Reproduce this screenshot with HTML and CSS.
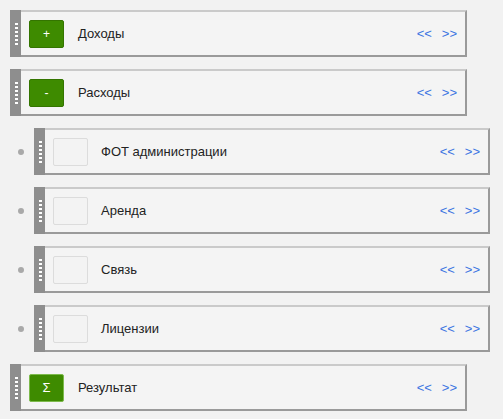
FILE: index.html
```html
<!DOCTYPE html>
<html>
<head>
<meta charset="utf-8">
<link rel="stylesheet" href="styles.css">
</head>
<body>
<div class="list">
  <div class="row">
    <div class="card">
      <div class="handle"><span class="grip"></span></div>
      <div class="body">
        <span class="btn">+</span>
        <span class="title">Доходы</span>
        <span class="nav"><a>&lt;&lt;</a><a>&gt;&gt;</a></span>
      </div>
    </div>
  </div>
  <div class="row">
    <div class="card">
      <div class="handle"><span class="grip"></span></div>
      <div class="body">
        <span class="btn">-</span>
        <span class="title">Расходы</span>
        <span class="nav"><a>&lt;&lt;</a><a>&gt;&gt;</a></span>
      </div>
    </div>
  </div>
  <div class="row child">
    <span class="bullet"></span>
    <div class="card">
      <div class="handle"><span class="grip"></span></div>
      <div class="body">
        <span class="box"></span>
        <span class="title">ФОТ администрации</span>
        <span class="nav"><a>&lt;&lt;</a><a>&gt;&gt;</a></span>
      </div>
    </div>
  </div>
  <div class="row child">
    <span class="bullet"></span>
    <div class="card">
      <div class="handle"><span class="grip"></span></div>
      <div class="body">
        <span class="box"></span>
        <span class="title">Аренда</span>
        <span class="nav"><a>&lt;&lt;</a><a>&gt;&gt;</a></span>
      </div>
    </div>
  </div>
  <div class="row child">
    <span class="bullet"></span>
    <div class="card">
      <div class="handle"><span class="grip"></span></div>
      <div class="body">
        <span class="box"></span>
        <span class="title">Связь</span>
        <span class="nav"><a>&lt;&lt;</a><a>&gt;&gt;</a></span>
      </div>
    </div>
  </div>
  <div class="row child">
    <span class="bullet"></span>
    <div class="card">
      <div class="handle"><span class="grip"></span></div>
      <div class="body">
        <span class="box"></span>
        <span class="title">Лицензии</span>
        <span class="nav"><a>&lt;&lt;</a><a>&gt;&gt;</a></span>
      </div>
    </div>
  </div>
  <div class="row">
    <div class="card">
      <div class="handle"><span class="grip"></span></div>
      <div class="body">
        <span class="btn sum">Σ</span>
        <span class="title">Результат</span>
        <span class="nav"><a>&lt;&lt;</a><a>&gt;&gt;</a></span>
      </div>
    </div>
  </div>
</div>
</body>
</html>
```

FILE: styles.css
```css
html, body {
  margin: 0;
  padding: 0;
  background: #f2f2f2;
  font-family: "Liberation Sans", Arial, sans-serif;
}
.list {
  display: flex;
  flex-direction: column;
  gap: 12px;
  padding: 10px 0 0 10px;
}
.row {
  display: flex;
  align-items: center;
}
.card {
  display: flex;
  width: 457px;
  height: 47px;
  background: #f4f4f4;
}
.child .card {
  width: 456px;
  margin-left: 10px;
}
.bullet {
  width: 6px;
  height: 6px;
  border-radius: 50%;
  background: #a9a9a9;
  margin-left: 8px;
}
.handle {
  width: 11px;
  background: #8e8e8e;
  display: flex;
  align-items: center;
  justify-content: center;
}
.grip {
  width: 3px;
  height: 22px;
  margin-left: 1px;
  background: repeating-linear-gradient(to bottom, #ffffff 0 2px, transparent 2px 4px);
}
.body {
  flex: 1;
  display: flex;
  align-items: center;
  border-top: 2px solid #cacaca;
  border-right: 2px solid #9a9a9a;
  border-bottom: 2px solid #9a9a9a;
  padding: 0 8px;
}
.btn {
  width: 33px;
  height: 26px;
  border: 1px solid #347500;
  border-radius: 2px;
  background: #3e8b00;
  color: #fff;
  font-size: 12px;
  display: flex;
  align-items: center;
  justify-content: center;
}
.btn.sum {
  border-color: #7dba4c;
  font-size: 13px;
}
.box {
  width: 33px;
  height: 26px;
  border: 1px solid #dcdcdc;
  border-radius: 2px;
  background: #f3f3f3;
}
.title {
  margin-left: 14px;
  font-size: 13px;
  color: #222;
  flex: 1;
}
.child .title {
  margin-left: 13px;
}
.nav {
  display: flex;
  gap: 10px;
  font-size: 13px;
  color: #3b74e2;
}
```
